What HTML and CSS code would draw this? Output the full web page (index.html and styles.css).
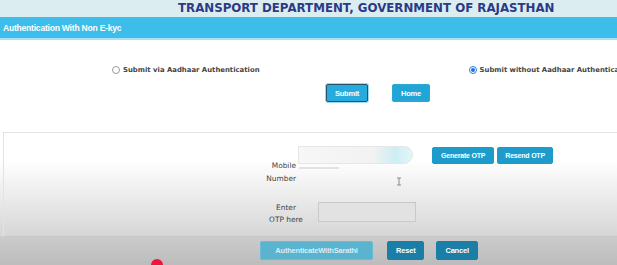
FILE: index.html
```html
<!DOCTYPE html>
<html lang="en">
<head>
  <meta charset="UTF-8">
  <title>Authentication With Non E-kyc</title>
  <link rel="stylesheet" href="styles.css">
</head>
<body>

  <!-- Header -->
  <div class="site-header">
    <h1>TRANSPORT DEPARTMENT, GOVERNMENT OF RAJASTHAN</h1>
  </div>
  <div class="section-bar">Authentication With Non E-kyc</div>

  <!-- Choice of submission -->
  <div class="choice-row">
    <label class="choice choice-left">
      <span class="radio"></span> Submit via Aadhaar Authentication
    </label>
    <label class="choice choice-right">
      <span class="radio checked"></span> Submit without Aadhaar Authentication
    </label>
  </div>

  <div class="action-row">
    <button class="btn btn-focus">Submit</button>
    <button class="btn">Home</button>
  </div>

  <!-- OTP panel -->
  <div class="otp-panel">
    <div class="form-row mobile-row">
      <div class="field-label mobile-label">Mobile<br>Number</div>
      <div class="mobile-input"><span class="blur-line"></span></div>
      <div class="otp-buttons">
        <button class="btn btn-small">Generate OTP</button>
        <button class="btn btn-small">Resend OTP</button>
      </div>
      <svg class="ibeam" width="6" height="9" viewBox="0 0 6 9">
        <path d="M1 1h4M3 1v7M1 8h4" stroke="#8a8a8a" stroke-width="1" fill="none"/>
      </svg>
    </div>

    <div class="form-row otp-row">
      <div class="field-label otp-label">Enter<br>OTP here</div>
      <div class="otp-input"></div>
    </div>
  </div>

  <div class="bottom-row">
    <button class="btn btn-disabled">AuthenticateWithSarathi</button>
    <button class="btn btn-dark">Reset</button>
    <button class="btn btn-dark">Cancel</button>
  </div>

  <span class="cursor-dot"></span>

</body>
</html>
```

FILE: styles.css
```css
body {
  margin: 0;
  font-family: "DejaVu Sans", Verdana, sans-serif;
  color: #333;
  height: 265px;
  overflow: hidden;
  position: relative;
  background: linear-gradient(to bottom, #fff 0, #fff 160px, #d6d6d6 236px, #cbcbcb 237px, #bcbcbc 265px);
}

.site-header {
  height: 17px;
  background-color: #dcedf2;
  padding-left: 178px;
}

.site-header h1 {
  margin: 0;
  font-size: 11.8px;
  line-height: 17px;
  font-weight: bold;
  color: #2d3a86;
  white-space: nowrap;
}

.section-bar {
  height: 21px;
  line-height: 22px;
  background-color: #3cbdea;
  border-bottom: 2px solid #a9e1f4;
  color: #fff;
  font-family: "Liberation Sans", Arial, sans-serif;
  font-weight: bold;
  font-size: 8.5px;
  padding-left: 3px;
  letter-spacing: -0.2px;
}

.choice-row {
  display: flex;
  margin-top: 23px;
  height: 14px;
  white-space: nowrap;
}

.choice {
  display: flex;
  align-items: center;
  gap: 3px;
  font-size: 6.9px;
  font-weight: bold;
  color: #444;
}

.choice-left {
  margin-left: 112px;
}

.choice-right {
  margin-left: 209px;
}

.radio {
  width: 6px;
  height: 6px;
  border: 1px solid #999;
  border-radius: 50%;
  background: #fff;
  position: relative;
}

.radio.checked {
  border-color: #2a7de0;
}

.radio.checked::after {
  content: "";
  position: absolute;
  left: 1px;
  top: 1px;
  width: 4px;
  height: 4px;
  border-radius: 50%;
  background: #1e6fe0;
}

.action-row {
  display: flex;
  gap: 24px;
  margin-top: 7px;
  padding-left: 326px;
}

.btn {
  height: 18px;
  padding: 0 8px;
  border: 1px solid #2aa7d3;
  border-radius: 2px;
  background-color: #21a5d6;
  color: #fff;
  font-family: "Liberation Sans", Arial, sans-serif;
  font-weight: bold;
  font-size: 7.5px;
  letter-spacing: -0.2px;
  cursor: pointer;
}

.action-row .btn {
  width: 42px;
  height: 18px;
  padding: 0;
}

.action-row .btn + .btn {
  width: 38px;
}

.btn-focus {
  border: 1.5px solid #23536a;
  box-shadow: 0 0 0 1px #9fd9ee;
  background-color: #28aadd;
}

.otp-panel {
  margin: 30px 0 0 3px;
  height: 103px;
  border: 1px solid #e3e3e3;
  border-right: none;
  border-bottom-color: #c6c6c6;
  position: relative;
}

.form-row {
  display: flex;
  align-items: flex-start;
}

.field-label {
  font-size: 7.4px;
  line-height: 12.5px;
  color: #444;
}

.mobile-row {
  margin-top: 13px;
}

.mobile-label {
  width: 292px;
  text-align: right;
  padding-top: 14px;
}

.mobile-input {
  width: 113px;
  height: 16px;
  margin-left: 2px;
  border: 1px solid #e6e6e6;
  border-radius: 0 9px 9px 0;
  background: linear-gradient(to right, #f7f7f7 0, #f2f2f2 65%, #cdeef2 85%, #e3f6f8 100%);
  position: relative;
}

.blur-line {
  position: absolute;
  left: 0;
  top: 20px;
  width: 40px;
  height: 2px;
  background: #e2e2e2;
}

.otp-buttons {
  display: flex;
  gap: 3px;
  margin-left: 19px;
  margin-top: 1px;
}

.btn-small {
  height: 17px;
  padding: 0 7px;
  background-color: #1d9ccc;
  border-color: #1d9ccc;
  font-size: 7px;
}

.btn-small:first-child {
  padding: 0 8px;
}

.ibeam {
  position: absolute;
  left: 392px;
  top: 44px;
}

.otp-row {
  margin-top: 17px;
}

.otp-label {
  width: 58px;
  margin-left: 253px;
  text-align: center;
  padding-top: 0;
  line-height: 12px;
}

.otp-input {
  width: 96px;
  height: 18px;
  margin-left: 3px;
  border: 1px solid #c8c8c8;
  background: #e2e2e2;
}

.bottom-row {
  display: flex;
  margin-top: 4px;
  padding-left: 260px;
}

.bottom-row .btn {
  height: 19px;
}

.btn-disabled {
  width: 113px;
  background-color: #5ab3cf;
  border-color: #6cbbd4;
  color: #d9eef5;
  font-weight: bold;
}

.btn-dark {
  background-color: #1a7ea7;
  border-color: #1a7ea7;
  margin-left: 14px;
  padding: 0 8px;
}

.btn-dark + .btn-dark {
  margin-left: 12px;
}

.cursor-dot {
  position: absolute;
  left: 151px;
  top: 259px;
  width: 12px;
  height: 12px;
  border-radius: 50%;
  background-color: #f2123c;
}
```
